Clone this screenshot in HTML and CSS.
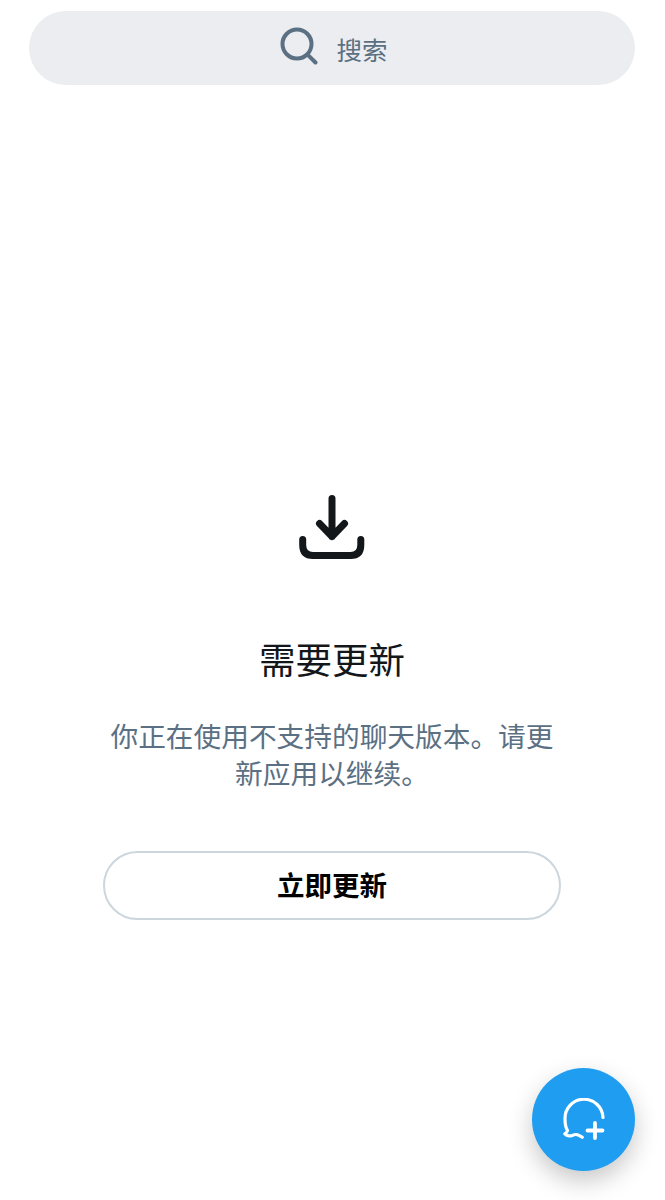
FILE: index.html
```html
<!DOCTYPE html>
<html lang="zh-CN">
<head>
<meta charset="utf-8">
<title>需要更新</title>
<link rel="stylesheet" href="styles.css">
</head>
<body>
<div class="page">
  <div class="search">
    <svg class="search-icon" viewBox="0 0 38 38" width="38" height="38" fill="none" stroke="#5b7083" stroke-width="4" stroke-linecap="round"><circle cx="17" cy="17" r="14.500"/><path d="M27.800 27.800 L35.500 35.500"/></svg>
    <span class="search-text">搜索</span>
  </div>
  <main class="notice">
    <svg class="download" viewBox="0 0 66 66" width="66" height="66" fill="none" stroke="#14171a" stroke-width="7" stroke-linecap="round" stroke-linejoin="round"><path d="M33 3.500 V41.500 M20.500 28.500 L33 41.500 L45.500 28.500"/><path d="M3.700 44.500 V50 Q3.700 60.500 14 60.500 H51.500 Q61.800 60.500 61.800 50 V44.500"/></svg>
    <h1 class="title">需要更新</h1>
    <p class="desc">你正在使用不支持的聊天版本。请更新应用以继续。</p>
    <button class="update" type="button">立即更新</button>
  </main>
  <button class="fab" type="button" aria-label="新聊天">
    <svg viewBox="0 0 44 44" width="44" height="44" fill="none" stroke="#fff" stroke-width="3.200" stroke-linecap="round" stroke-linejoin="round"><path d="M41 19.500 A19 19 0 0 0 3 21 C3 25 3.500 29.500 5.500 32.500 C5.200 34 4.200 35 2.800 35.800 C4.800 37.800 6.800 38 8.500 37.800 C10.500 37.500 12 36.300 14 36.500 C16.500 36.700 18 38 20.200 39.200"/><path d="M33 25 V40 M25.500 32.500 H40.500" stroke-width="3.800"/></svg>
  </button>
</div>
</body>
</html>
```

FILE: styles.css
```css
* { box-sizing: border-box; }
html, body { margin: 0; padding: 0; background: #fff; }
body { font-family: "Noto Sans CJK SC", "Liberation Sans", sans-serif; }
.page { position: relative; width: 665px; height: 1200px; overflow: hidden; padding: 11px 30px 0 29px; }
.search {
  height: 74px;
  border-radius: 37px;
  background: #ebedf0;
  display: flex;
  align-items: center;
  justify-content: center;
  gap: 18px;
  padding-left: 4px;
}
.search-icon { display: block; margin-top: -4px; }
.search-text { font-size: 25.500px; line-height: 36px; color: #5b7083; margin-top: 2px; }
.notice { display: flex; flex-direction: column; align-items: center; padding-top: 410px; }
.download { display: block; }
.title { margin: 73px 0 0; font-size: 36.500px; line-height: 50px; font-weight: 400; color: #14171a; }
.desc { margin: 33px 0 0; width: 456px; font-size: 27.700px; line-height: 37px; text-align: center; color: #5b7083; }
.update {
  margin-top: 60px;
  width: 458px;
  height: 69px;
  border: 2px solid #ccd6dd;
  border-radius: 35px;
  background: #fff;
  font-family: inherit;
  font-size: 27.500px;
  font-weight: 700;
  color: #000;
  padding: 0 0 3px;
}
.fab {
  position: absolute;
  left: 532px;
  top: 1068px;
  width: 103px;
  height: 103px;
  border: 0;
  border-radius: 50%;
  background: #1f9df1;
  box-shadow: 0 10px 24px rgba(0, 0, 0, .22);
  display: flex;
  align-items: center;
  justify-content: center;
  padding: 0;
}
```
